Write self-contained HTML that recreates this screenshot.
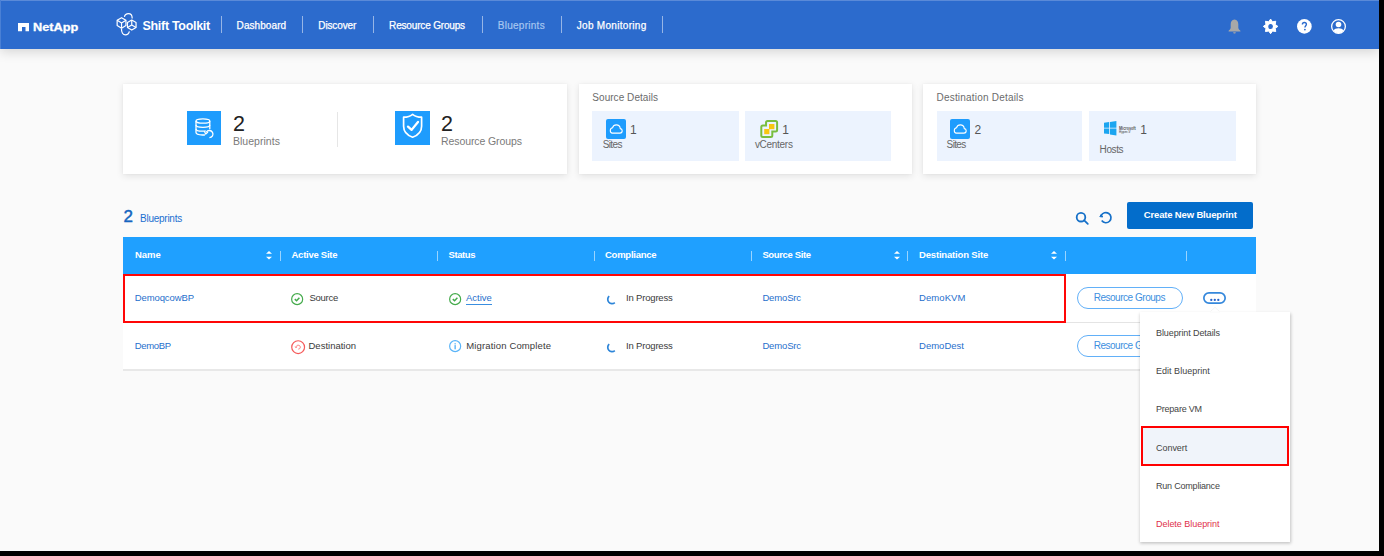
<!DOCTYPE html>
<html><head><meta charset="utf-8">
<style>
*{margin:0;padding:0;box-sizing:border-box}
html,body{width:1384px;height:556px;overflow:hidden;background:#000}
body{font-family:"Liberation Sans",sans-serif;position:relative}
#page{position:absolute;left:0;top:0;width:1379px;height:551px;background:#fafafa;overflow:hidden}
.a{position:absolute}
.t{position:absolute;white-space:nowrap;line-height:1}
#nav{position:absolute;left:0;top:0;width:1379px;height:49px;background:#2c6bcd;box-shadow:0 3px 11px rgba(0,0,0,.15)}
.sep{position:absolute;top:16px;width:1px;height:17px;background:rgba(255,255,255,.5)}
.card{position:absolute;top:84px;height:90px;background:#fff;box-shadow:0 2px 7px rgba(0,0,0,.10),0 0 2px rgba(0,0,0,.04)}
.ib{position:absolute;top:111.1px;height:49.8px;background:#ecf3fe}
.hs{position:absolute;top:251px;width:1px;height:10px;background:rgba(255,255,255,.55)}
svg{position:absolute;overflow:visible}
</style></head><body>
<div id="page">
  <div id="nav">
    <div class="a" style="left:0;top:0;width:1379px;height:1px;background:#5a8ad8"></div><div class="a" style="left:0;top:0;width:1px;height:49px;background:#4a80d5"></div>
    <svg style="left:18px;top:23px" width="11" height="8.3" viewBox="0 0 11 8.3"><path d="M0 0H11V8.3H7.5V4H4V8.3H0Z" fill="#fff"/></svg>
    <svg style="left:112px;top:8px" width="30" height="32" viewBox="0 0 30 32" fill="none" stroke="#fff" stroke-width="1.2" stroke-linejoin="round">
      <path d="M9.55 9.65 L13.95 12.3 V17.6 L9.55 20.25 L5.15 17.6 V12.3 Z"/>
      <path d="M5.15 12.3 L9.55 14.95 L13.95 12.3 M9.55 14.95 V20.25"/>
      <path d="M19.75 12.1 L24.05 14.6 V19.6 L19.75 22.1 L15.45 19.6 V14.6 Z"/>
      <path d="M19.75 12.1 V17.1 L15.45 19.6 M19.75 17.1 L24.05 19.6"/>
      <path d="M12.4 8.9 C12.9 6.6 14.6 5.6 16.4 5.6 C18.6 5.6 20.2 7.4 20.2 10.4"/>
      <path d="M9.5 20.7 C9.3 24.6 11 26.8 13.4 26.8 C15.4 26.8 16.9 25.3 17.4 23.3"/>
    </svg>
    <div class="sep" style="left:221px"></div>
    <div class="sep" style="left:302px"></div>
    <div class="sep" style="left:373px"></div>
    <div class="sep" style="left:482px"></div>
    <div class="sep" style="left:561px"></div>
    <div class="sep" style="left:662px"></div>
    <!-- bell -->
    <svg style="left:1228.3px;top:19px" width="13" height="15" viewBox="0 0 13 15"><path d="M6.5 0.5 C3.9 0.5 2.7 2.7 2.7 5.3 V8.8 C2.7 10 1.6 11 0.6 11.8 V12.6 H12.4 V11.8 C11.4 11 10.3 10 10.3 8.8 V5.3 C10.3 2.7 9.1 0.5 6.5 0.5Z M5.2 13.2 H7.8 C7.8 14 7.3 14.6 6.5 14.6 C5.7 14.6 5.2 14 5.2 13.2Z" fill="#a8a8a8"/></svg>
    <!-- gear -->
    <svg style="left:1263px;top:19px" width="15" height="15" viewBox="0 0 15 15"><path d="M7.60 0.10 L9.51 2.78 L12.76 2.24 L12.22 5.49 L14.90 7.40 L12.22 9.31 L12.76 12.56 L9.51 12.02 L7.60 14.70 L5.69 12.02 L2.44 12.56 L2.98 9.31 L0.30 7.40 L2.98 5.49 L2.44 2.24 L5.69 2.78Z" fill="#fff" stroke="#fff" stroke-width="1" stroke-linejoin="round"/><ellipse cx="7.6" cy="7.5" rx="2.3" ry="2.6" fill="#2c6bcd"/></svg>
    <!-- help -->
    <svg style="left:1296.6px;top:19.1px" width="15" height="15" viewBox="0 0 15 15"><circle cx="7.35" cy="7.4" r="7.35" fill="#fff"/><path d="M5.4 5.4 C5.4 4.1 6.3 3.5 7.35 3.5 C8.5 3.5 9.4 4.2 9.4 5.3 C9.4 6.6 7.9 6.9 7.9 8.5" fill="none" stroke="#2c6bcd" stroke-width="1.4"/><circle cx="7.9" cy="10.6" r="0.9" fill="#2c6bcd"/></svg>
    <!-- user -->
    <svg style="left:1331px;top:19px" width="15" height="15" viewBox="0 0 15 15"><circle cx="7.5" cy="7.5" r="6.85" fill="none" stroke="#fff" stroke-width="1.3"/><circle cx="7.5" cy="5.5" r="2.8" fill="#fff"/><path d="M2.4 11.6 C3.4 9.9 5.2 9.2 7.5 9.2 C9.8 9.2 11.6 9.9 12.6 11.6 C11.4 13.2 9.6 14.2 7.5 14.2 C5.4 14.2 3.6 13.2 2.4 11.6Z" fill="#fff"/></svg>
  </div>

  <!-- cards -->
  <div class="card" style="left:123px;width:444px"></div>
  <div class="card" style="left:578.5px;width:333.5px"></div>
  <div class="card" style="left:923.3px;width:332.5px"></div>

  <!-- db icon -->
  <div class="a" style="left:187px;top:111.3px;width:34px;height:33.6px;background:#1e9cfd"></div>
  <svg style="left:187px;top:111.3px" width="34" height="34" viewBox="0 0 34 34" fill="none" stroke="#fff" stroke-width="1.3">
    <ellipse cx="15.9" cy="10" rx="6.9" ry="2.2"/>
    <path d="M9 10 V21.6 C9 22.9 11.5 24 15.5 24 C16.5 24 17.2 24 18 23.8"/>
    <path d="M22.8 10 V18.2"/>
    <path d="M9 14 C9 15.3 12 16.3 15.9 16.3 C19.8 16.3 22.8 15.3 22.8 14"/>
    <path d="M9 17.9 C9 19.2 12 20.1 15.9 20.1 C17 20.1 17.9 20 18.7 19.9"/>
    <path d="M19.3 21.2 A3.6 3.6 0 1 1 22.4 26.7"/>
    <path d="M17.4 20.3 L18.7 23.1 L21 21" stroke-linejoin="round"/>
  </svg>
  <div class="a" style="left:337px;top:111.5px;width:1px;height:35px;background:#e6e6e6"></div>
  <!-- shield icon -->
  <div class="a" style="left:395px;top:111.3px;width:34.8px;height:33.6px;background:#1e9cfd"></div>
  <svg style="left:395px;top:111.3px" width="35" height="34" viewBox="0 0 35 34" fill="none" stroke="#fff">
    <path d="M17.6 3.3 C15.4 5.2 12.3 6.2 8.6 6.2 V15.2 C8.6 20.5 12.4 24.3 17.6 26.2 C22.8 24.3 26.6 20.5 26.6 15.2 V6.2 C22.9 6.2 19.8 5.2 17.6 3.3 Z" stroke-width="1.7" stroke-linejoin="round"/>
    <path d="M13 15.6 L16.6 18.9 L23 11" stroke-width="2.3" stroke-linecap="round" stroke-linejoin="round"/>
  </svg>

  <div class="ib" style="left:592px;width:146.7px"></div>
  <div class="ib" style="left:745px;width:146.2px"></div>
  <div class="ib" style="left:936.5px;width:145.9px"></div>
  <div class="ib" style="left:1089px;width:146.7px"></div>

  <!-- cloud icons -->
  <svg style="left:605.6px;top:118.9px" width="20" height="20" viewBox="0 0 20 20"><rect width="20" height="20" rx="2" fill="#1e9cfd"/><path d="M6.3 14.1 H13.9 C15.3 14.1 16.2 13.1 16.2 11.8 C16.2 10.6 15.4 9.7 14.3 9.6 C14 7.4 12.3 5.9 10.3 5.9 C8.5 5.9 7.1 7 6.6 8.7 C5.2 8.9 4.3 10.1 4.3 11.5 C4.3 13 5.1 14.1 6.3 14.1Z" fill="none" stroke="#fff" stroke-width="1.1"/></svg>
  <svg style="left:950px;top:118.9px" width="20" height="20" viewBox="0 0 20 20"><rect width="20" height="20" rx="2" fill="#1e9cfd"/><path d="M6.3 14.1 H13.9 C15.3 14.1 16.2 13.1 16.2 11.8 C16.2 10.6 15.4 9.7 14.3 9.6 C14 7.4 12.3 5.9 10.3 5.9 C8.5 5.9 7.1 7 6.6 8.7 C5.2 8.9 4.3 10.1 4.3 11.5 C4.3 13 5.1 14.1 6.3 14.1Z" fill="none" stroke="#fff" stroke-width="1.1"/></svg>
  <!-- vcenter icon -->
  <svg style="left:759.6px;top:119.8px" width="19" height="18" viewBox="0 0 19 18">
    <path d="M7.6 0.95 H15.6 Q17.1 0.95 17.1 2.45 V10 Q17.1 11.5 15.6 11.5 H12.3 V15.4 Q12.3 16.9 10.8 16.9 H2.8 Q1.3 16.9 1.3 15.4 V6.9 Q1.3 5.4 2.8 5.4 H6.05 V2.45 Q6.05 0.95 7.6 0.95Z" fill="none" stroke="#79bd3e" stroke-width="2"/>
    <rect x="9" y="4" width="5.4" height="5.2" fill="#f8c612"/>
    <rect x="4.2" y="9" width="5.2" height="5.2" fill="#f8c612"/>
  </svg>
  <!-- windows icon -->
  <svg style="left:1103.6px;top:121.4px" width="13" height="15" viewBox="0 0 13 15">
    <path d="M0 1.8 L5.2 1.1 V6.7 H0Z M6 1 L12.4 0 V6.7 H6Z M0 7.5 H5.2 V13.1 L0 12.4Z M6 7.5 H12.4 V14.5 L6 13.5Z" fill="#1ba5f0"/>
  </svg>
  <svg style="left:1118.6px;top:124.5px" width="17" height="9" viewBox="0 0 17 9"><text x="0" y="4.6" font-family="Liberation Sans" font-weight="bold" font-size="4.6" fill="#555" textLength="16.8" lengthAdjust="spacingAndGlyphs">Microsoft</text><text x="0" y="8.2" font-family="Liberation Sans" font-weight="bold" font-size="3.6" fill="#666" textLength="11.5" lengthAdjust="spacingAndGlyphs">Hyper-V</text></svg>
  

  <!-- search / refresh -->
  <svg style="left:1074px;top:210px" width="16" height="16" viewBox="0 0 16 16" fill="none" stroke="#1570c8" stroke-width="1.8">
    <circle cx="7" cy="7.2" r="4.3"/><path d="M10.2 10.4 L13.8 13.8" stroke-linecap="round"/>
  </svg>
  <svg style="left:1098px;top:210px" width="16" height="16" viewBox="0 0 16 16" fill="none" stroke="#1570c8" stroke-width="1.7">
    <path d="M3.2 5.6 A5.1 5.1 0 1 1 3.7 10.6"/>
    <path d="M1.8 6.6 L3.1 4.6 L4.7 7Z" fill="#1570c8" stroke-width="1" stroke-linejoin="round"/>
  </svg>
  <div class="a" style="left:1127px;top:202px;width:125.7px;height:26.8px;background:#036dcb;border-radius:2px"></div>

  <!-- table -->
  <div class="a" style="left:123px;top:237px;width:1132.5px;height:37px;background:#1fa0ff"></div>
  <div class="a" style="left:123px;top:273.8px;width:1132.5px;height:95.5px;background:#fff"></div>
  <div class="a" style="left:123px;top:322px;width:1132.5px;height:1px;background:#e4e4e4"></div>
  <div class="a" style="left:123px;top:369px;width:1132.5px;height:2px;background:#e8e8e8"></div>

  <div class="hs" style="left:279.5px"></div>
  <div class="hs" style="left:437.2px"></div>
  <div class="hs" style="left:593.5px"></div>
  <div class="hs" style="left:750.8px"></div>
  <div class="hs" style="left:907px"></div>
  <div class="hs" style="left:1065px"></div>
  <div class="hs" style="left:1186.2px"></div>
  <!-- sort icons -->
  <svg style="left:265.9px;top:251px" width="6" height="9" viewBox="0 0 6 9"><path d="M0 2.7 L3 0 L6 2.7Z M0 5.8 L3 8.6 L6 5.8Z" fill="#fff"/></svg>
  <svg style="left:893.5px;top:251px" width="6" height="9" viewBox="0 0 6 9"><path d="M0 2.7 L3 0 L6 2.7Z M0 5.8 L3 8.6 L6 5.8Z" fill="#fff"/></svg>
  <svg style="left:1050.5px;top:251px" width="6" height="9" viewBox="0 0 6 9"><path d="M0 2.7 L3 0 L6 2.7Z M0 5.8 L3 8.6 L6 5.8Z" fill="#fff"/></svg>

  <!-- status icons -->
  <svg style="left:290.8px;top:292.6px" width="12.3" height="12.3" viewBox="0 0 12.3 12.3"><circle cx="6.15" cy="6.15" r="5.5" fill="none" stroke="#45ab4c" stroke-width="1.2"/><path d="M3.8 6.1 L5.6 7.8 L8.4 4.8" fill="none" stroke="#45ab4c" stroke-width="1.5"/></svg>
  <svg style="left:448.5px;top:292.5px" width="12.3" height="12.3" viewBox="0 0 12.3 12.3"><circle cx="6.15" cy="6.15" r="5.5" fill="none" stroke="#45ab4c" stroke-width="1.2"/><path d="M3.8 6.1 L5.6 7.8 L8.4 4.8" fill="none" stroke="#45ab4c" stroke-width="1.5"/></svg>
  <div class="a" style="left:466px;top:303.7px;width:26px;height:1.3px;background:#3a8ee0"></div>
  <svg style="left:290.8px;top:339.8px" width="14.3" height="14.3" viewBox="0 0 14.3 14.3"><circle cx="7.15" cy="7.15" r="6.4" fill="none" stroke="#f55a5a" stroke-width="1.2"/><path d="M5 7.3 C5.2 5.8 6.2 5.2 7.2 5.2 C8.3 5.2 9.3 6 9.3 7.2 C9.3 8.4 8.4 9.1 7.3 9.1" fill="none" stroke="#f77" stroke-width="1"/><path d="M4.2 6.6 L5 7.8 L6 6.8" fill="none" stroke="#f77" stroke-width="0.9"/></svg>
  <svg style="left:448.5px;top:339.8px" width="12.3" height="12.3" viewBox="0 0 12.3 12.3"><circle cx="6.15" cy="6.15" r="5.5" fill="none" stroke="#5ab4f8" stroke-width="1.2"/><rect x="5.45" y="5.1" width="1.4" height="4.2" fill="#5ab4f8"/><rect x="5.45" y="3.2" width="1.4" height="1.2" fill="#5ab4f8"/></svg>
  <svg style="left:606px;top:294.5px" width="10" height="10" viewBox="0 0 10 10"><path d="M3.2 1.2 A4 4 0 0 0 8.8 7.6" fill="none" stroke="#2d85d8" stroke-width="1.7"/></svg>
  <svg style="left:606px;top:342.5px" width="10" height="10" viewBox="0 0 10 10"><path d="M3.2 1.2 A4 4 0 0 0 8.8 7.6" fill="none" stroke="#2d85d8" stroke-width="1.7"/></svg>

  <!-- red box row 1 -->
  <div class="a" style="left:123.4px;top:274px;width:942.6px;height:49.2px;border:2.75px solid #ff0606"></div>

  <!-- pills -->
  <div class="a" style="left:1076.6px;top:287.3px;width:106px;height:21.6px;border:1.5px solid #62b0f8;border-radius:11px"></div>
  <div class="a" style="left:1076.6px;top:335.2px;width:106px;height:21.6px;border:1.5px solid #62b0f8;border-radius:11px"></div>
  <svg style="left:1203px;top:292.3px" width="23" height="12" viewBox="0 0 23 12"><rect x="0.85" y="0.85" width="21.3" height="10.3" rx="5.15" fill="#fff" stroke="#3588dc" stroke-width="1.7"/><circle cx="8.3" cy="7.9" r="1.15" fill="#2563c9"/><circle cx="11.8" cy="7.9" r="1.15" fill="#2563c9"/><circle cx="15.3" cy="7.9" r="1.15" fill="#2563c9"/></svg>

  <!-- menu -->
  <div class="a" style="z-index:5;left:1139.7px;top:311.9px;width:150.3px;height:229.8px;background:#fff;box-shadow:0.5px 1px 3px 0.5px rgba(0,0,0,.22)"></div>
  <svg style="z-index:5;left:1209.5px;top:307.3px" width="10" height="5" viewBox="0 0 10 5"><path d="M0 5 L5 0.3 L10 5Z" fill="#fff" stroke="rgba(0,0,0,0.08)" stroke-width="0.6"/><rect x="0" y="4.4" width="10" height="1" fill="#fff"/></svg>
  <div class="a" style="z-index:5;left:1141.4px;top:425.5px;width:147.4px;height:40.7px;background:#f0f4fa;border:2.4px solid #ff0000"></div>
<div class="t" id="netapp" style="left:33.1px;top:21.99px;font-size:11px;color:#fff;font-weight:bold;transform:scaleX(1.16);transform-origin:0 0;-webkit-text-stroke:0.3px #fff;">NetApp</div>
<div class="t" id="shift" style="left:142.5px;top:19.62px;font-size:12.5px;color:#fff;font-weight:bold;letter-spacing:-0.300px;">Shift Toolkit</div>
<div class="t" id="n1" style="left:236.6px;top:20.73px;font-size:10px;color:#fff;letter-spacing:0.072px;-webkit-text-stroke:0.25px #fff;">Dashboard</div>
<div class="t" id="n2" style="left:318.3px;top:20.73px;font-size:10px;color:#fff;letter-spacing:-0.129px;-webkit-text-stroke:0.25px #fff;">Discover</div>
<div class="t" id="n3" style="left:389.1px;top:20.73px;font-size:10px;color:#fff;letter-spacing:-0.170px;-webkit-text-stroke:0.25px #fff;">Resource Groups</div>
<div class="t" id="n4" style="left:497.7px;top:20.73px;font-size:10px;color:#a6c6f0;letter-spacing:0.281px;-webkit-text-stroke:0.2px #a6c6f0;">Blueprints</div>
<div class="t" id="n5" style="left:576.8px;top:20.73px;font-size:10px;color:#fff;letter-spacing:0.293px;-webkit-text-stroke:0.25px #fff;">Job Monitoring</div>
<div class="t" id="c2a" style="left:232.9px;top:114.20px;font-size:21.5px;color:#222;">2</div>
<div class="t" id="c1l" style="left:232.9px;top:135.51px;font-size:10.5px;color:#7a7a7a;letter-spacing:0.033px;">Blueprints</div>
<div class="t" id="c2b" style="left:441px;top:114.20px;font-size:21.5px;color:#222;">2</div>
<div class="t" id="c2l" style="left:441px;top:135.51px;font-size:10.5px;color:#7a7a7a;letter-spacing:-0.093px;">Resource Groups</div>
<div class="t" id="sd" style="left:592.3px;top:93.13px;font-size:10px;color:#6b6b6b;letter-spacing:0.051px;">Source Details</div>
<div class="t" id="dd" style="left:936.5px;top:93.13px;font-size:10px;color:#6b6b6b;letter-spacing:0.201px;">Destination Details</div>
<div class="t" id="s1n" style="left:629.9px;top:124.24px;font-size:12px;color:#555;">1</div>
<div class="t" id="s1l" style="left:602.7px;top:140.34px;font-size:10px;color:#666;letter-spacing:-0.634px;">Sites</div>
<div class="t" id="v1n" style="left:782.2px;top:124.24px;font-size:12px;color:#555;">1</div>
<div class="t" id="v1l" style="left:754.9px;top:140.34px;font-size:10px;color:#666;letter-spacing:-0.288px;">vCenters</div>
<div class="t" id="d1n" style="left:974.4px;top:124.24px;font-size:12px;color:#555;">2</div>
<div class="t" id="d1l" style="left:946.6px;top:140.34px;font-size:10px;color:#666;letter-spacing:-0.634px;">Sites</div>
<div class="t" id="h1n" style="left:1140.3px;top:124.24px;font-size:12px;color:#555;">1</div>
<div class="t" id="h1l" style="left:1099.6px;top:144.63px;font-size:10px;color:#666;letter-spacing:-0.391px;">Hosts</div>
<div class="t" id="bpn" style="left:123.6px;top:207.91px;font-size:17px;color:#1565c0;-webkit-text-stroke:0.45px #1565c0;">2</div>
<div class="t" id="bpl" style="left:140px;top:213.94px;font-size:10px;color:#1a6fd0;letter-spacing:-0.252px;">Blueprints</div>
<div class="t" id="btn" style="left:1143.8px;top:209.96px;font-size:9.5px;color:#fff;font-weight:bold;letter-spacing:-0.162px;">Create New Blueprint</div>
<div class="t" id="h_name" style="left:134.9px;top:249.96px;font-size:9.5px;color:#fff;font-weight:bold;letter-spacing:-0.025px;">Name</div>
<div class="t" id="h_as" style="left:291.5px;top:249.96px;font-size:9.5px;color:#fff;font-weight:bold;letter-spacing:-0.258px;">Active Site</div>
<div class="t" id="h_st" style="left:448.5px;top:249.96px;font-size:9.5px;color:#fff;font-weight:bold;letter-spacing:-0.409px;">Status</div>
<div class="t" id="h_co" style="left:605px;top:249.96px;font-size:9.5px;color:#fff;font-weight:bold;letter-spacing:-0.251px;">Compliance</div>
<div class="t" id="h_ss" style="left:762.4px;top:249.96px;font-size:9.5px;color:#fff;font-weight:bold;letter-spacing:-0.368px;">Source Site</div>
<div class="t" id="h_ds" style="left:919px;top:249.96px;font-size:9.5px;color:#fff;font-weight:bold;letter-spacing:-0.173px;">Destination Site</div>
<div class="t" id="r1a" style="left:134.7px;top:293.16px;font-size:9.5px;color:#1f6fcc;letter-spacing:-0.100px;">DemoqcowBP</div>
<div class="t" id="r1b" style="left:309.5px;top:293.16px;font-size:9.5px;color:#3a3a3a;letter-spacing:-0.262px;">Source</div>
<div class="t" id="r1c" style="left:466px;top:293.16px;font-size:9.5px;color:#1f6fcc;letter-spacing:0.005px;">Active</div>
<div class="t" id="r1d" style="left:626px;top:293.16px;font-size:9.5px;color:#3a3a3a;letter-spacing:-0.178px;">In Progress</div>
<div class="t" id="r1e" style="left:762.4px;top:293.16px;font-size:9.5px;color:#1f6fcc;letter-spacing:-0.149px;">DemoSrc</div>
<div class="t" id="r1f" style="left:919px;top:293.16px;font-size:9.5px;color:#1f6fcc;letter-spacing:0.077px;">DemoKVM</div>
<div class="t" id="r2a" style="left:134.7px;top:341.06px;font-size:9.5px;color:#1f6fcc;letter-spacing:-0.323px;">DemoBP</div>
<div class="t" id="r2b" style="left:308.5px;top:341.06px;font-size:9.5px;color:#3a3a3a;letter-spacing:-0.003px;">Destination</div>
<div class="t" id="r2c" style="left:466.3px;top:341.06px;font-size:9.5px;color:#3a3a3a;letter-spacing:0.137px;">Migration Complete</div>
<div class="t" id="r2d" style="left:626px;top:341.06px;font-size:9.5px;color:#3a3a3a;letter-spacing:-0.178px;">In Progress</div>
<div class="t" id="r2e" style="left:762.4px;top:341.06px;font-size:9.5px;color:#1f6fcc;letter-spacing:-0.149px;">DemoSrc</div>
<div class="t" id="r2f" style="left:919px;top:341.06px;font-size:9.5px;color:#1f6fcc;letter-spacing:0.018px;">DemoDest</div>
<div class="t" id="p1" style="left:1093.7px;top:292.74px;font-size:10px;color:#3d8fe0;letter-spacing:-0.477px;">Resource Groups</div>
<div class="t" id="p2" style="left:1093.7px;top:340.64px;font-size:10px;color:#3d8fe0;letter-spacing:-0.477px;">Resource Groups</div>
<div class="t" id="m0" style="left:1156px;top:328.78px;font-size:9px;color:#444;letter-spacing:-0.096px;z-index:6;">Blueprint Details</div>
<div class="t" id="m1" style="left:1156px;top:366.98px;font-size:9px;color:#444;letter-spacing:0.021px;z-index:6;">Edit Blueprint</div>
<div class="t" id="m2" style="left:1156px;top:405.18px;font-size:9px;color:#444;letter-spacing:-0.226px;z-index:6;">Prepare VM</div>
<div class="t" id="m3" style="left:1156px;top:443.68px;font-size:9px;color:#444;letter-spacing:-0.036px;z-index:6;">Convert</div>
<div class="t" id="m4" style="left:1156px;top:481.98px;font-size:9px;color:#444;letter-spacing:-0.204px;z-index:6;">Run Compliance</div>
<div class="t" id="m5" style="left:1156px;top:520.38px;font-size:9px;color:#e0304a;letter-spacing:-0.036px;z-index:6;">Delete Blueprint</div>
</div>
</body></html>
